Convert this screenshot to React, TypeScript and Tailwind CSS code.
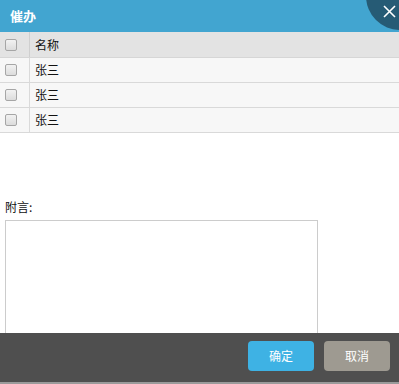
import React from "react";

const rows = ["张三", "张三", "张三"];

function Box() {
  return (
    <span className="block w-[12px] h-[12px] rounded-[2px] border border-[#a6a6a6] bg-gradient-to-b from-[#f2f2f2] to-[#dcdcdc]" />
  );
}

export default function App() {
  return (
    <div
      className="relative w-[399px] h-[384px] bg-white overflow-hidden flex flex-col text-[12px] text-[#111]"
      style={{ fontFamily: '"Noto Sans CJK SC", "Noto Sans", sans-serif' }}
    >
      <div className="relative h-[32px] bg-[#42a5d0] flex items-center pl-[10px] shrink-0">
        <span className="text-white font-bold text-[13px]">催办</span>
        <div className="absolute left-[366px] top-[-38px] w-[68px] h-[68px] rounded-full bg-[#265b75]" />
        <svg className="absolute left-[383px] top-[5px]" width="13" height="13" viewBox="0 0 13 13">
          <path d="M1 1L12 12M12 1L1 12" stroke="white" strokeWidth="1.6" />
        </svg>
      </div>

      <div className="flex flex-col">
        <div className="flex h-[26px] bg-[#e3e3e3] border-b border-[#d6d6d6]">
          <div className="w-[30px] flex items-center pl-[5px] border-r border-[#cfcfcf]">
            <Box />
          </div>
          <div className="flex items-center pl-[5px]">名称</div>
        </div>
        {rows.map((r, i) => (
          <div key={i} className="flex h-[25px] bg-[#f7f7f7] border-b border-[#d9d9d9]">
            <div className="w-[30px] flex items-center pl-[5px] border-r border-[#dadada]">
              <Box />
            </div>
            <div className="flex items-center pl-[5px]">{r}</div>
          </div>
        ))}
      </div>

      <div className="pl-[5px] pt-[66px] leading-[16px]">附言:</div>
      <div className="ml-[5px] mt-[5px] w-[313px] flex-1 border border-[#cccccc] border-b-0" />

      <div className="h-[51px] shrink-0 bg-[#4f4f4f] border-b-2 border-[#9a9a9a] flex items-center justify-end gap-[10px] pr-[9px] pb-[3px]">
        <button className="w-[66px] h-[30px] rounded-[4px] bg-[#3eb2e4] text-white text-[12px]">确定</button>
        <button className="w-[66px] h-[30px] rounded-[4px] bg-[#9e9a91] text-white text-[12px]">取消</button>
      </div>
    </div>
  );
}
